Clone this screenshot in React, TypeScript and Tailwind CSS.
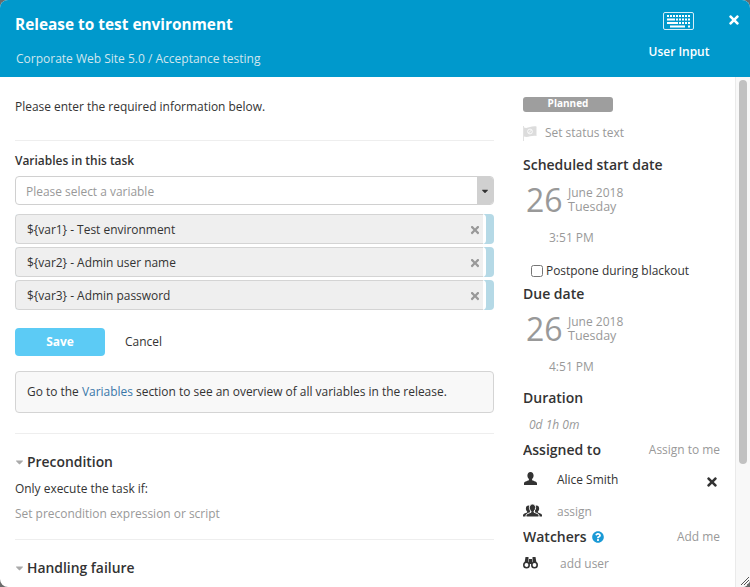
import { FaCaretDown, FaQuestionCircle, FaTimes } from 'react-icons/fa'

const variables = ['${var1} - Test environment', '${var2} - Admin user name', '${var3} - Admin password']

function KeyboardIcon() {
  return (
    <svg width="32" height="20" viewBox="0 0 32 20" fill="none">
      <rect x="0.5" y="0.5" width="30" height="17" rx="1.5" stroke="#d5eef7" />
      <g fill="#fff">
        <rect x="4" y="3" width="2" height="2" />
        <rect x="7" y="3" width="2" height="2" />
        <rect x="10" y="3" width="2" height="2" />
        <rect x="13" y="3" width="2" height="2" />
        <rect x="16" y="3" width="2" height="2" />
        <rect x="19" y="3" width="2" height="2" />
        <rect x="22" y="3" width="2" height="2" />
        <rect x="25" y="3" width="2" height="2" />
        <rect x="4" y="6.5" width="8" height="2" />
        <rect x="13" y="6.5" width="2" height="2" />
        <rect x="16" y="6.5" width="2" height="2" />
        <rect x="19" y="6.5" width="2" height="2" />
        <rect x="22" y="6.5" width="2" height="2" />
        <rect x="25" y="6.5" width="2" height="2" />
        <rect x="4" y="10" width="11" height="2" />
        <rect x="16" y="10" width="2" height="2" />
        <rect x="19" y="10" width="2" height="2" />
        <rect x="22" y="10" width="2" height="2" />
        <rect x="25" y="10" width="2" height="2" />
        <rect x="7" y="13.5" width="15" height="2" />
        <rect x="25" y="13.5" width="2" height="2" />
      </g>
    </svg>
  )
}

function FlagIcon() {
  return (
    <svg width="14" height="15" viewBox="0 0 14 15">
      <path d="M0 0h1v15H0z" fill="#e2e2e2" />
      <path d="M1 1.5C5 3 8 -0.5 13.5 0.5V10C8 9 5 12 1 10.5z" fill="#dcdcdc" />
      <circle cx="7" cy="5.5" r="2.4" fill="none" stroke="#fff" strokeWidth="0.8" />
      <path d="M5.5 7l3-3" stroke="#fff" strokeWidth="0.8" />
    </svg>
  )
}

const bust = 'M6.5 0C4.6 0 3.4 1.5 3.4 3.6c0 1.5.6 2.8 1.5 3.5v1.2C3 9.2 0 9.6 0 11.6V13h13v-1.4c0-2-3-2.4-4.900-3.300V7.100c.9-.7 1.500-2 1.500-3.500C9.600 1.500 8.400 0 6.500 0z'

function UserIcon() {
  return (
    <svg width="13" height="13" viewBox="0 0 13 13" fill="#333" className="mb-[3px]">
      <path d={bust} />
    </svg>
  )
}

function UsersIcon() {
  return (
    <svg width="19" height="13" viewBox="0 0 19 13" fill="#333" className="mb-[3px]">
      <path d={bust} transform="translate(0 1.500) scale(.85)" />
      <path d={bust} transform="translate(8 1.500) scale(.85)" />
      <path d={bust} transform="translate(3 0)" stroke="#fff" strokeWidth="1" />
    </svg>
  )
}

function BinocularsIcon() {
  return (
    <svg width="15" height="13" viewBox="0 0 15 13" className="mb-[3px]">
      <path d="M2.500 1h3v6h-4zM9.500 1h3l1 6h-4zM6 3h3v5H6z" fill="#333" />
      <circle cx="3.500" cy="9" r="2.700" fill="#fff" stroke="#333" strokeWidth="1.600" />
      <circle cx="11.500" cy="9" r="2.700" fill="#fff" stroke="#333" strokeWidth="1.600" />
    </svg>
  )
}

function DateBlock({ time }: { time: string }) {
  return (
    <div className="text-[#999]">
      <div className="flex h-[33px] pl-[3px]">
        <span className="w-[42px] text-[32px] leading-[31px]">26</span>
        <div className="leading-[14px] pt-[2px]">
          <div className="text-[12px]">June 2018</div>
          <div className="text-[12.5px]">Tuesday</div>
        </div>
      </div>
      <div className="mt-[12px] pl-[26px] text-[12px] leading-[18px]">{time}</div>
    </div>
  )
}

export default function App() {
  return (
    <div className="w-[750px] h-[587px] bg-[#6b6b6b] font-['Open_Sans',sans-serif] text-[11.95px] text-[#333]">
      <div className="h-full flex flex-col rounded-[8px] overflow-hidden bg-white">
        {/* Header */}
        <header className="h-[77px] shrink-0 bg-[#0099cc] flex justify-between text-white">
          <div className="pl-[15px]">
            <h1 className="mt-[14px] text-[15.4px] leading-[22px] font-bold">Release to test environment</h1>
            <p className="mt-[14px] pl-[1px] text-[12px] leading-[18px] text-[#d0e6ee]">
              Corporate Web Site 5.0 / Acceptance testing
            </p>
          </div>
          <div className="flex">
            <div className="w-[60px] mr-[11px] flex flex-col items-center">
              <div className="mt-[12px] h-[20px]">
                <KeyboardIcon />
              </div>
              <span className="mt-[11px] leading-[18px] font-semibold whitespace-nowrap">User Input</span>
            </div>
            <div className="w-[30px] pt-[13px] pl-[7px]">
              <FaTimes size={14} />
            </div>
          </div>
        </header>

        <div className="flex-1 flex min-h-0">
          {/* Main column */}
          <main className="w-[494px] shrink-0 pl-[15px]">
            <p className="mt-[21px] leading-[18px]">Please enter the required information below.</p>
            <hr className="mt-[24px] border-[#eee]" />
            <h3 className="mt-[11px] leading-[18px] font-semibold">Variables in this task</h3>
            <div className="mt-[6px] h-[29px] flex border border-[#d0d0d0] rounded-[4px] overflow-hidden">
              <span className="flex-1 pl-[10px] leading-[29px] text-[#999]">Please select a variable</span>
              <span className="w-[16px] bg-[#d0d0d0] flex items-center justify-center text-[#333]">
                <FaCaretDown size={10} />
              </span>
            </div>
            <div className="mt-[9px] flex flex-col gap-[3px]">
              {variables.map((v) => (
                <div key={v} className="h-[30px] flex rounded-[4px] overflow-hidden bg-[#b5d9e6]">
                  <div className="flex-1 flex pr-[3px] rounded-r-[4px] bg-white">
                    <div className="flex-1 flex items-center justify-between pl-[11px] pr-[2px] bg-[#efefef] border-y border-l border-[#d4d4d4] rounded-l-[4px]">
                      <span className="pt-[2px] leading-[26px]">{v}</span>
                      <FaTimes size={12} className="text-[#999] mt-[2px]" />
                    </div>
                  </div>
                  <div className="w-[8px]" />
                </div>
              ))}
            </div>
            <div className="mt-[18px] flex items-center">
              <button className="w-[90px] h-[28px] rounded-[4px] bg-[#5ccbf5] text-white font-bold">Save</button>
              <span className="ml-[20px] leading-[28px]">Cancel</span>
            </div>
            <div className="mt-[15px] h-[42px] px-[11px] flex items-center border border-[#d4d4d4] rounded-[4px] bg-[#f8f8f8]">
              <p>
                Go to the <span className="text-[#3a77a8]">Variables</span> section to see an overview of all variables in the release.
              </p>
            </div>
            <hr className="mt-[20px] border-[#eee]" />
            <h2 className="mt-[18px] flex items-center text-[13.9px] leading-[20px] font-semibold">
              <FaCaretDown size={12} className="text-[#aaa] mr-[3px] w-[9px]" />
              Precondition
            </h2>
            <p className="mt-[8px] leading-[18px]">Only execute the task if:</p>
            <p className="mt-[7px] leading-[18px] text-[#999]">Set precondition expression or script</p>
            <hr className="mt-[16px] border-[#eee]" />
            <h2 className="mt-[18px] flex items-center text-[13.9px] leading-[20px] font-semibold">
              <FaCaretDown size={12} className="text-[#aaa] mr-[3px] w-[9px]" />
              Handling failure
            </h2>
          </main>

          {/* Side column */}
          <aside className="w-[197px] ml-[29px] shrink-0 overflow-hidden">
            <div className="mt-[20px] w-[90px] h-[15px] rounded-[3px] bg-[#9e9e9e] text-white text-[10px] leading-[13px] font-bold text-center">Planned</div>
            <div className="mt-[12px] h-[18px] flex items-center text-[#999]">
              <FlagIcon />
              <span className="ml-[8px]">Set status text</span>
            </div>
            <h3 className="mt-[13px] text-[14px] leading-[20px] font-semibold">Scheduled start date</h3>
            <div className="mt-[9px]">
              <DateBlock time="3:51 PM" />
            </div>
            <label className="mt-[15px] pl-[8px] flex items-center h-[18px]">
              <input type="checkbox" className="w-[12px] h-[12px] mr-[3px]" />
              <span>Postpone during blackout</span>
            </label>
            <h3 className="mt-[4px] text-[14px] leading-[20px] font-semibold">Due date</h3>
            <div className="mt-[9px]">
              <DateBlock time="4:51 PM" />
            </div>
            <h3 className="mt-[12px] text-[14px] leading-[20px] font-semibold">Duration</h3>
            <p className="mt-[8px] pl-[6px] text-[12px] leading-[18px] italic text-[#999]">0d 1h 0m</p>
            <div className="mt-[6px] flex justify-between items-center h-[20px]">
              <h3 className="text-[14px] leading-[20px] font-semibold">Assigned to</h3>
              <span className="text-[#999]">Assign to me</span>
            </div>
            <div className="mt-[11px] flex items-center h-[18px]">
              <span className="w-[34px] pl-[1px]"><UserIcon /></span>
              <span className="flex-1">Alice Smith</span>
              <FaTimes size={14} className="mr-[1px] mt-[4px]" />
            </div>
            <div className="mt-[14px] flex items-center h-[18px] text-[#999]">
              <span className="w-[34px]"><UsersIcon /></span>
              <span>assign</span>
            </div>
            <div className="mt-[6px] flex justify-between items-center h-[20px]">
              <h3 className="flex items-center text-[14px] leading-[20px] font-semibold">
                Watchers
                <FaQuestionCircle size={12} className="ml-[5px] text-[#1a9ad6]" />
              </h3>
              <span className="text-[#999]">Add me</span>
            </div>
            <div className="mt-[8px] flex items-center h-[18px] text-[#999]">
              <span className="w-[37px]"><BinocularsIcon /></span>
              <span>add user</span>
            </div>
          </aside>

          {/* Scrollbar */}
          <div className="ml-[15px] w-[15px] shrink-0 bg-[#f8f8f8] border-l border-[#eaeaea] flex flex-col">
            <div className="mt-[3px] ml-[3px] w-[8px] h-[384px] rounded-[4px] bg-[#c1c1c1]" />
            <div className="mt-auto mb-[2px] ml-[3px] flex justify-end pr-[1px]">
              <svg width="8" height="8" viewBox="0 0 8 8" stroke="#555" strokeWidth="1">
                <path d="M0 8L8 0M3 8L8 3M6 8L8 6" />
              </svg>
            </div>
          </div>
        </div>
      </div>
    </div>
  )
}
